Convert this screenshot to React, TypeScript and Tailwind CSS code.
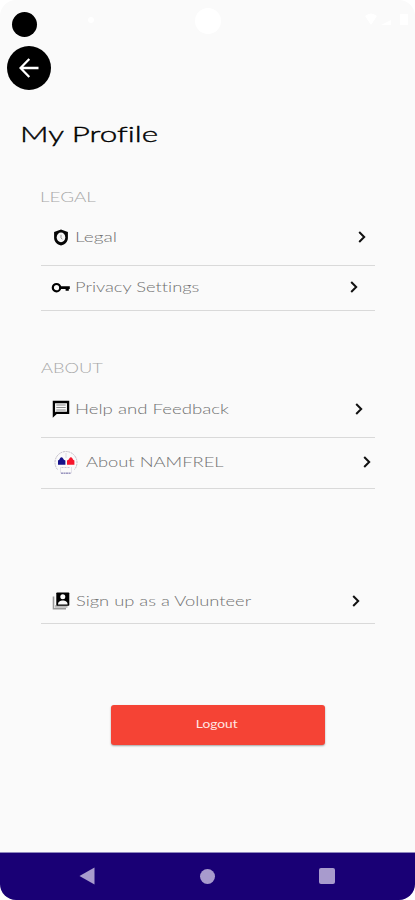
import type { ReactNode } from "react";

interface RowProps {
  icon: ReactNode;
  label: string;
  labelClass: string;
  className: string;
  chevronClass: string;
}

function ShieldIcon() {
  return (
    <svg viewBox="0 0 20 20" className="w-5 h-5">
      <path d="M10 1.500 16.900 3.900V10c0 3.600-2.800 6.500-6.900 7.500C6 16.500 3.100 13.600 3.100 10V3.900Z" fill="#050505" />
      <ellipse cx="10" cy="9.400" rx="4.300" ry="4.800" fill="#f5f5f5" />
      <path d="M10 6.800v3l1.300 1.500" fill="none" stroke="#888" strokeWidth="0.900" />
    </svg>
  );
}

function KeyIcon() {
  return (
    <svg viewBox="0 0 19 12" className="h-3 w-[19px]">
      <circle cx="5.500" cy="5.700" r="3.700" fill="none" stroke="#000" strokeWidth="2.200" />
      <path d="M9 4.300h9.800v2.700h-1v1.800h-3.200V7H9Z" fill="#000" />
    </svg>
  );
}

function MessageIcon() {
  return (
    <svg viewBox="0 0 18 18" className="w-[18px] h-[18px]">
      <path d="M1.900 2h14.200v10.800H4.200L1.900 15Z" fill="#fafafa" stroke="#000" strokeWidth="2.300" />
      <path d="M4.300 5h9.400M4.300 7.500h9.400M4.300 10h9.400" stroke="#8a8a8a" strokeWidth="1" />
    </svg>
  );
}

function NamfrelLogo() {
  return (
    <svg viewBox="0 0 26 26" className="w-[26px] h-[26px]">
      <path d="M4.500 19.500A11 11 0 1 1 21.500 19.500" fill="none" stroke="#bbb6c2" strokeWidth="0.900" strokeDasharray="2 0.700" />
      <path d="M13 3v5" stroke="#d4d4dc" strokeWidth="0.800" />
      <path d="M5 14.800v-4.200q1.500-.6 1.900-2.200 1.600-2.200 3.200 0 .5 1.500 2.300 2.200v4.200Z" fill="#16128a" />
      <path d="M21.400 14.800v-4.200q-1.500-.6-1.900-2.200-1.600-2.200-3.200 0-.5 1.500-2.300 2.200v4.200Z" fill="#f6152c" />
      <path d="M7.500 17v6h11v-6" fill="none" stroke="#dddbe4" strokeWidth="0.800" />
      <path d="M8.500 17.500h9" stroke="#c9c7d6" strokeWidth="1" strokeDasharray="2 1" />
      <path d="M8 23.300h10" stroke="#9c98c0" strokeWidth="1.600" strokeDasharray="2 0.500" />
    </svg>
  );
}

function AccountsIcon() {
  return (
    <svg viewBox="0 0 18 18" className="w-[18px] h-[18px]">
      <path d="M1.500 4.500v12.300h12.500" fill="none" stroke="#999" strokeWidth="1.600" />
      <path d="M3 13h12.500v2.800H3Z" fill="#bbb" />
      <rect x="4.300" y="0.500" width="13" height="13.300" rx="0.800" fill="#000" />
      <circle cx="10.800" cy="4.700" r="2.500" fill="#fafafa" />
      <path d="M6 12.500c0-3 2.300-4 4.800-4s4.800 1 4.800 4Z" fill="#fafafa" />
    </svg>
  );
}

function Row({ icon, label, labelClass, className, chevronClass }: RowProps) {
  return (
    <div className={`flex items-center border-b border-[#d9d9d9] ${className}`}>
      {icon}
      <span className={`mb-px origin-left whitespace-nowrap text-[14px] leading-5 font-light text-[#707070] ${labelClass}`}>
        {label}
      </span>
      <svg viewBox="0 0 8 12" className={`ml-auto mb-px w-2 h-3 ${chevronClass}`}>
        <path d="M1.200 1 6.200 6 1.200 11" fill="none" stroke="#111" strokeWidth="2" />
      </svg>
    </div>
  );
}

export default function App() {
  return (
    <div className="w-[415px] h-[900px] bg-white font-['Lato',sans-serif] [font-variant-ligatures:none]">
      <div className="flex h-full flex-col overflow-hidden rounded-[16px] bg-[#fafafa]">
        {/* Status bar */}
        <div className="flex h-[46px] shrink-0 items-start pl-3 pt-[11px]">
          <div className="mt-px h-[25px] w-[25px] rounded-full bg-black" />
          <div className="ml-[51px] mt-[6px] h-1.5 w-1.5 rounded-full bg-white" />
          <div className="ml-[101px] -mt-[3px] h-[26px] w-[26px] rounded-full bg-white" />
          <svg viewBox="0 0 46 14" className="ml-[144px] mt-px h-[14px] w-[46px]" fill="#fff">
            <path d="M0 4Q6-1 12 4L6 13ZM16 13l10-5v5ZM35 2h8v11h-8Z" />
          </svg>
        </div>

        <button className="ml-[7px] flex h-11 w-11 shrink-0 items-center justify-center rounded-full bg-black">
          <svg viewBox="0 0 20 20" className="h-5 w-5" fill="none" stroke="#fff" strokeWidth="2.300">
            <path d="M19.500 10H2M10.300 1 1.500 10l8.800 9" />
          </svg>
        </button>

        <h1 className="ml-[20px] mt-[28px] h-8 origin-left scale-x-[1.430] self-start whitespace-nowrap text-[22px] leading-8 font-light text-black [-webkit-text-stroke:0.400px_black]">
          My Profile
        </h1>

        <main className="ml-[41px] flex w-[334px] flex-1 flex-col">
          <h2 className="-ml-px mt-[37px] h-5 origin-left scale-x-[1.300] self-start text-[14.500px] leading-5 font-light text-[#a8a8a8]">
            LEGAL
          </h2>
          <Row
            icon={<ShieldIcon />}
            label="Legal"
            labelClass="ml-[4px] scale-x-[1.370]"
            className="mt-1 h-[55px] pb-px pl-[10px]"
            chevronClass="mr-[9px]"
          />
          <Row
            icon={<KeyIcon />}
            label="Privacy Settings"
            labelClass="ml-[5px] scale-x-[1.310]"
            className="h-[45px] pb-px pl-[10px]"
            chevronClass="mr-[17px]"
          />

          <h2 className="mt-[47px] h-5 origin-left scale-x-[1.260] self-start text-[14.500px] leading-5 font-light text-[#a8a8a8]">
            ABOUT
          </h2>
          <Row
            icon={<MessageIcon />}
            label="Help and Feedback"
            labelClass="ml-[5px] scale-x-[1.330]"
            className="mt-1 h-[56px] pb-px pl-[11px]"
            chevronClass="mr-[12px]"
          />
          <Row
            icon={<NamfrelLogo />}
            label="About NAMFREL"
            labelClass="ml-[7px] scale-x-[1.310]"
            className="h-[51px] pb-px pl-[12px]"
            chevronClass="mr-[4px]"
          />
          <Row
            icon={<AccountsIcon />}
            label="Sign up as a Volunteer"
            labelClass="ml-[6px] scale-x-[1.310]"
            className="mt-[90px] h-[45px] pl-[11px]"
            chevronClass="mr-[15px]"
          />

          <button className="ml-[70px] mt-[81px] flex h-10 w-[214px] items-center justify-center rounded-[3px] bg-[#f54335] shadow-[0_1px_2px_rgba(0,0,0,0.350)]">
            <span className="mr-[2px] mb-0.5 scale-x-[1.250] text-[11px] leading-4 text-[#ffe6e3]">Logout</span>
          </button>
        </main>

        {/* Android navigation bar */}
        <nav className="flex h-12 shrink-0 items-center border-t border-[#8f88bd] bg-[#190075]">
          <svg viewBox="0 0 16 18" className="ml-[79px] mb-px h-[18px] w-4">
            <path d="M0.500 9 15.500 0.500v17Z" fill="#a89bcd" />
          </svg>
          <div className="mb-px ml-[105px] h-[15px] w-[15px] rounded-full bg-[#a89bcd]" />
          <div className="mb-px ml-[104px] h-4 w-4 rounded-[2px] bg-[#a89bcd]" />
        </nav>
      </div>
    </div>
  );
}
